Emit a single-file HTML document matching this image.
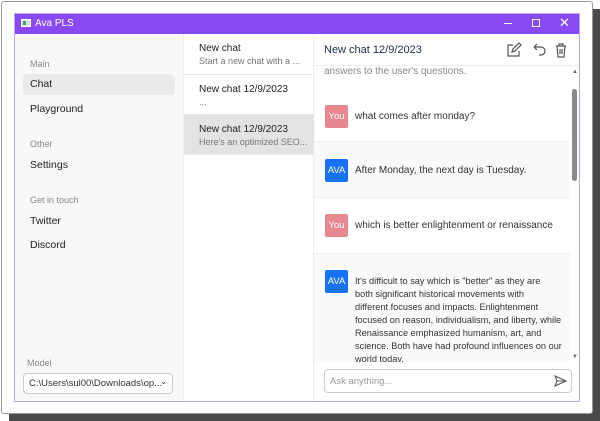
<!DOCTYPE html>
<html><head><meta charset="utf-8"><style>
*{margin:0;padding:0;box-sizing:border-box}
body{width:600px;height:421px;background:#fff;font-family:"Liberation Sans",sans-serif;position:relative;overflow:hidden}
.abs{position:absolute}
.shadow{left:9px;top:9px;width:591px;height:412px;background:#4a4a4a}
.card{left:1px;top:1px;width:592px;height:413px;background:#fff;border:1px solid #999;border-radius:3px}
.win{left:14px;top:13px;width:566px;height:389px;border:1px solid #b9a6ee;background:#fff;overflow:hidden}
.tb{left:0;top:0;width:566px;height:20px;background:#8a4af3;color:#fff;font-size:10px}
.side{left:0;top:20px;width:168px;height:369px;background:#f8f8f8}
.lbl{font-size:9px;color:#888}
.it{font-size:10.5px;color:#222}
.list{left:168px;top:20px;width:131px;height:369px;background:#fff;border-right:1px solid #eee;border-left:1px solid #eee}
.ci{left:0;width:130px;height:40px;border-bottom:1px solid #e8e8e8;padding:9px 0 0 15px}
.ci b{display:block;font-weight:normal;font-size:10px;color:#222}
.ci span{display:block;font-size:9px;color:#777;margin-top:2px}
.main{left:299px;top:20px;width:267px;height:369px}
.msg{left:0;width:256px;border-bottom:1px solid #eee}
.av{width:23px;height:23px;border-radius:2px;color:#fff;font-size:9.5px;text-align:center;line-height:23px}
.you{background:#e8878f}.ava{background:#1672f3}
.t{font-size:10px;color:#333;line-height:13px;white-space:nowrap}
.sb{z-index:2}
</style></head><body>
<div class="abs shadow"></div>
<div class="abs card"></div>
<div class="abs win">
 <div class="abs tb">
  <div class="abs" style="left:6px;top:5px;width:10px;height:8px;background:#ddd;border:1px solid #fff"></div>
  <div class="abs" style="left:8px;top:7px;width:3px;height:4px;background:#3a7"></div>
  <div class="abs" style="left:20px;top:4px">Ava PLS</div>
  <div class="abs" style="left:489px;top:9px;width:8px;height:1px;background:#fff"></div>
  <div class="abs" style="left:517px;top:5px;width:8px;height:8px;border:1px solid #fff"></div>
  <div class="abs" style="left:544px;top:1px;font-size:13px">✕</div>
 </div>
 <div class="abs side">
  <div class="abs lbl" style="left:15px;top:25px">Main</div>
  <div class="abs" style="left:8px;top:40px;width:152px;height:21px;background:#ebebeb;border-radius:4px"></div>
  <div class="abs it" style="left:15px;top:44px">Chat</div>
  <div class="abs it" style="left:15px;top:69px">Playground</div>
  <div class="abs lbl" style="left:15px;top:105px">Other</div>
  <div class="abs it" style="left:15px;top:125px">Settings</div>
  <div class="abs lbl" style="left:15px;top:161px">Get in touch</div>
  <div class="abs it" style="left:15px;top:181px">Twitter</div>
  <div class="abs it" style="left:15px;top:205px">Discord</div>
  <div class="abs lbl" style="left:12px;top:324px">Model</div>
  <div class="abs" style="left:8px;top:339px;width:150px;height:21px;background:#fff;border:1px solid #ccc;border-radius:4px;font-size:9.5px;color:#333;padding:4px 0 0 5px">C:\Users\sul00\Downloads\op...<span style="position:absolute;right:5px;top:3px;font-size:8px">⌄</span></div>
 </div>
 <div class="abs list">
  <div class="abs ci" style="top:0;height:41px"><b>New chat</b><span>Start a new chat with a ...</span></div>
  <div class="abs ci" style="top:41px"><b>New chat 12/9/2023</b><span>...</span></div>
  <div class="abs ci" style="top:81px;background:#e3e3e3"><b>New chat 12/9/2023</b><span>Here's an optimized SEO...</span></div>
 </div>
 <div class="abs main">
  <div class="abs" style="left:0;top:0;width:267px;height:32px;border-bottom:1px solid #eee"></div>
  <div class="abs" style="left:10px;top:10px;font-size:11px;color:#1e2d4a">New chat 12/9/2023</div>
  <svg class="abs" style="left:192px;top:8px" width="70" height="16" viewBox="0 0 70 16" fill="none" stroke="#555" stroke-width="1.2">
   <path d="M7 3H2v11h11V9"/><path d="M6 10l1-3 6-6 2 2-6 6z"/>
   <path d="M28 5h7a4 4 0 0 1 0 8h-2M28 5l3-3M28 5l3 3"/>
   <path d="M50 4h10M53 4V2h4v2M51 4l1 11h6l1-11M54 7v5M56 7v5"/>
  </svg>
  <div class="abs t" style="left:10px;top:31px;color:#888">answers to the user's questions.</div>
  <div class="abs sb" style="left:258px;top:35px;font-size:6px;color:#666">▲</div>
  <div class="abs sb" style="left:258px;top:55px;width:5px;height:92px;background:#8a8a8a;border-radius:3px"></div>
  <div class="abs sb" style="left:258px;top:320px;font-size:6px;color:#666">▼</div>
  <div class="abs msg" style="top:52px;height:56px;background:#fff"></div>
  <div class="abs av you" style="left:11px;top:71px">You</div>
  <div class="abs t" style="left:41px;top:76px">what comes after monday?</div>
  <div class="abs msg" style="top:108px;height:56px;background:#fafafc"></div>
  <div class="abs av ava" style="left:11px;top:125px">AVA</div>
  <div class="abs t" style="left:41px;top:130px">After Monday, the next day is Tuesday.</div>
  <div class="abs msg" style="top:164px;height:56px;background:#fff"></div>
  <div class="abs av you" style="left:11px;top:180px">You</div>
  <div class="abs t" style="left:41px;top:185px">which is better enlightenment or renaissance</div>
  <div class="abs msg" style="top:220px;height:120px;background:#fafafc;border:none"></div>
  <div class="abs av ava" style="left:11px;top:236px">AVA</div>
  <div class="abs t" style="left:41px;top:241px;font-size:9.2px">It's difficult to say which is "better" as they are<br>both significant historical movements with<br>different focuses and impacts. Enlightenment<br>focused on reason, individualism, and liberty, while<br>Renaissance emphasized humanism, art, and<br>science. Both have had profound influences on our<br>world today.</div>
  <div class="abs" style="left:0;top:328px;width:256px;height:41px;background:#fff"></div>
  <div class="abs" style="left:10px;top:335px;width:248px;height:24px;border:1px solid #ccc;border-radius:4px;font-size:9.5px;color:#999;padding:6px 0 0 5px">Ask anything...</div>
  <svg class="abs" style="left:239px;top:340px" width="14" height="14" viewBox="0 0 14 14" fill="none" stroke="#555" stroke-width="1.1"><path d="M2 2l11 5-11 5 2-5zM4 7h9"/></svg>
 </div>
</div>
</body></html>
